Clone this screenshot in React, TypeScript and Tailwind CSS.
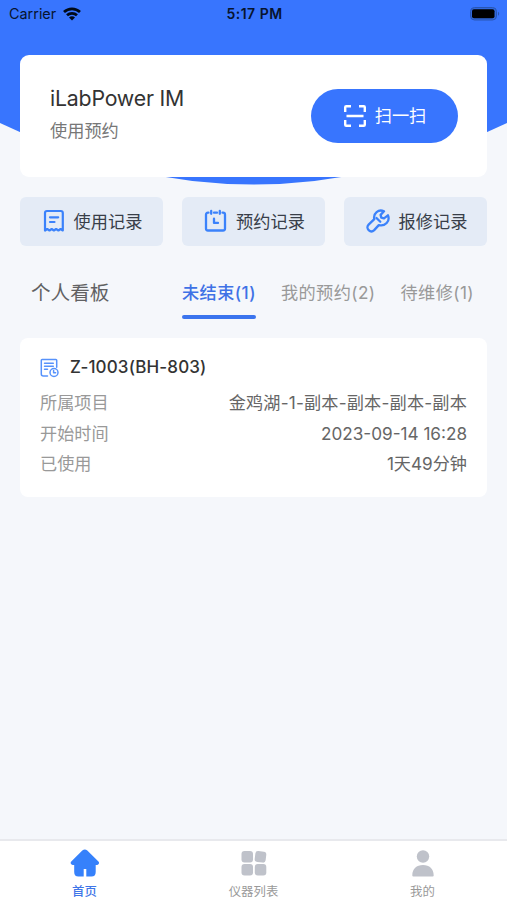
import React, { useState } from 'react';

const tabs = [
  { id: 'open', label: '未结束', count: 1 },
  { id: 'booked', label: '我的预约', count: 2 },
  { id: 'repair', label: '待维修', count: 1 },
];

const details = [
  { label: '所属项目', value: '金鸡湖-1-副本-副本-副本-副本', spacing: 'tracking-[0.2px]' },
  { label: '开始时间', value: '2023-09-14 16:28', spacing: '' },
  { label: '已使用', value: '1天49分钟', spacing: '' },
];

function WifiIcon() {
  return (
    <svg width="18" height="14" viewBox="0 0 18 14" fill="none" stroke="#000a18" strokeWidth="2.7">
      <path d="M1 5.1C5.5.8 12.5.8 17 5.1" />
      <path d="M4 8.3c2.8-2.7 7.2-2.7 10 0" />
      <path d="M9 13.4 6 10.4c1.6-1.5 4.4-1.5 6 0z" fill="#000a18" stroke="none" />
    </svg>
  );
}

function BatteryIcon() {
  return (
    <svg width="30" height="14" viewBox="0 0 30 14">
      <rect x="0.5" y="0.5" width="26" height="12.5" rx="4" fill="#3168dc" stroke="#2856b3" />
      <rect x="2" y="2.2" width="22.5" height="9" rx="2" fill="#000" />
      <path d="M28 4.8v4c1.6-.6 1.6-3.4 0-4z" fill="#2856b3" />
    </svg>
  );
}

function ScanIcon() {
  return (
    <svg width="24" height="24" viewBox="0 0 24 24" fill="none" stroke="white" strokeWidth="2.4">
      <path d="M2.2 8V3.2q0-1 1-1H8M16 2.2h4.8q1 0 1 1V8M21.8 16v4.8q0 1-1 1H16M8 21.8H3.2q-1 0-1-1V16M3.5 12h17" />
    </svg>
  );
}

function ReceiptIcon() {
  return (
    <svg width="22" height="24" viewBox="0 0 22 24" fill="none" stroke="#3b82fb" strokeWidth="2.2" strokeLinejoin="round" strokeLinecap="round">
      <path d="M2 21.5V4q0-2 2-2h13.8q2 0 2 2v17.5L17.6 20l-2.2 1.5-2.3-1.5-2.2 1.5L8.700 20l-2.200 1.500L4.200 20z" />
      <path d="M7 8.300h8.200M7 13h4.500" />
    </svg>
  );
}

function ScheduleIcon() {
  return (
    <svg width="23" height="24" viewBox="0 0 23 24" fill="none" stroke="#3b82fb" strokeWidth="2.3" strokeLinecap="round" strokeLinejoin="round">
      <path d="M4.500 3.700H4Q2 3.700 2 5.700v13.800q0 2 2 2h15q2 0 2-2V5.700q0-2-2-2h-.5M10 3.700h3" />
      <path d="M7.200 2v2.800M15.800 2v2.800" />
      <path d="M10 9.700v4.200h4" />
    </svg>
  );
}

function WrenchIcon() {
  return (
    <svg width="24" height="24" viewBox="0 0 24 24" fill="none" stroke="#3b82fb" strokeWidth="2.300" strokeLinecap="round" strokeLinejoin="round">
      <path d="M18 2.300C12.500-.2 7 4.200 8.300 10.200L2.600 15.600c-3.600 3.700 1.900 9.200 5.600 5.500l4.600-5c6.200 1.700 11.700-4 9.100-9.800l-3.900 3-2.700-.7-.7-2.700z" />
      <path d="m10.500 9 3.800 3.800" />
    </svg>
  );
}

function RecordIcon() {
  return (
    <svg width="20" height="20" viewBox="0 0 20 20" fill="none" stroke="#5792fb" strokeWidth="1.5" strokeLinecap="round" strokeLinejoin="round">
      <path d="M7.500 18H3.300Q1.300 18 1.300 16V2.300q0-.8.8-.8h13.800q.8 0 .8.800v7" />
      <path d="M4.500 5.200h8.800M4.500 8.200h8.800M4.500 11.200h3" />
      <circle cx="14" cy="14.500" r="4" />
      <path d="M13.600 12.600v2.200h2" />
    </svg>
  );
}

function HomeIcon() {
  return (
    <svg width="30" height="28" viewBox="0 0 30 28" fill="#3681fb">
      <path d="M12.300 1.600q2.500-2.100 5 0L28.200 12.200c1.900 1.900.4 3.900-2.500 3.800V23q0 4.500-4.200 4.500h-5.200V20h-2.600v7.500H8.400q-4.200 0-4.200-4.500v-7C1 16-.4 14.100 1.500 12.200z" />
    </svg>
  );
}

function GridIcon() {
  return (
    <svg width="26" height="26" viewBox="0 0 26 26" fill="#bfc2ca">
      <rect x="0.500" y="1" width="11.500" height="11.500" rx="3" />
      <rect x="14" y="1.300" width="11" height="11" rx="2.800" transform="rotate(7 19.500 6.800)" />
      <rect x="0.500" y="14" width="11.500" height="11.500" rx="3" />
      <rect x="13.800" y="14" width="11.500" height="11.500" rx="3" />
    </svg>
  );
}

function UserIcon() {
  return (
    <svg width="22" height="27" viewBox="0 0 22 27" fill="#bfc2ca">
      <circle cx="11" cy="6.500" r="6.200" />
      <path d="M.3 25.500C.3 18.800 4.500 15 11 15s10.700 3.800 10.700 10.500q0 1-1 1H1.300q-1 0-1-1z" />
    </svg>
  );
}

const shortcuts = [
  { label: '使用记录', icon: <ReceiptIcon /> },
  { label: '预约记录', icon: <ScheduleIcon /> },
  { label: '报修记录', icon: <WrenchIcon /> },
];

const navItems = [
  { id: 'home', label: '首页', icon: <HomeIcon /> },
  { id: 'devices', label: '仪器列表', icon: <GridIcon /> },
  { id: 'me', label: '我的', icon: <UserIcon /> },
];

function App() {
  const [activeTab, setActiveTab] = useState('open');
  const [activeNav, setActiveNav] = useState('home');

  return (
    <div className="relative isolate flex h-screen w-full flex-col overflow-hidden bg-[#f5f7fb] font-['Inter','Noto_Sans_CJK_SC',sans-serif]">
      {/* Curved header background */}
      <svg className="absolute inset-x-0 top-0 -z-10 w-full" height="190" viewBox="0 0 507 190" preserveAspectRatio="none">
        <path d="M0 0h507v123Q253.500 246 0 123z" fill="#3875fe" />
      </svg>

      <header className="grid h-[27px] grid-cols-3 items-center pl-[9px] pr-[7px] text-[#07142f]">
        <div className="flex items-center gap-[7px]">
          <span className="pt-0.5 text-[14.400px] leading-none">Carrier</span>
          <WifiIcon />
        </div>
        <span className="text-center text-[14px] leading-none font-semibold tracking-[0.5px]">5:17 PM</span>
        <div className="flex justify-end"><BatteryIcon /></div>
      </header>

      <main className="flex-1 px-5 pt-[27.500px]">
        <section className="flex h-[122.500px] items-center justify-between rounded-[9px] bg-white pl-[30px] pr-[29px]">
          <div className="-mt-1">
            <h1 className="text-[21.300px] leading-[30px] tracking-[-0.2px] text-[#333]">iLabPower IM</h1>
            <p className="mt-1 text-[17.200px] leading-7 text-[#777]">使用预约</p>
          </div>
          <button className="flex h-[54px] w-[147px] items-center justify-center gap-2 rounded-full bg-[#3875fe] text-[17.200px] text-white">
            <ScanIcon />
            扫一扫
          </button>
        </section>

        <div className="mt-[19.500px] grid grid-cols-3 gap-[19px]">
          {shortcuts.map((item) => (
            <button key={item.label} className="flex h-[49px] items-center justify-center gap-[9px] rounded-[6px] bg-[#e4ebf6] pl-0.5 text-[17.200px] text-[#383e49]">
              {item.icon}
              <span className="pt-px">{item.label}</span>
            </button>
          ))}
        </div>

        <div className="mt-[26px] flex h-[47.500px] items-start pl-[11px] pr-[13px]">
          <h2 className="mr-auto text-[19.600px] leading-[42px] text-[#616163]">个人看板</h2>
          <div className="flex gap-[25px]">
            {tabs.map((tab) => (
              <button
                key={tab.id}
                onClick={() => setActiveTab(tab.id)}
                className={`flex h-[47.500px] flex-col justify-between whitespace-nowrap text-[17.200px] leading-[42px] tracking-[0.4px] ${
                  activeTab === tab.id ? 'font-medium text-[#3f72e6]' : 'text-[#999]'
                }`}
              >
                <span>{tab.label}({tab.count})</span>
                {activeTab === tab.id && <span className="h-1 w-full shrink-0 rounded-full bg-[#3b74ee]" />}
              </button>
            ))}
          </div>
        </div>

        <section className="mt-[19px] h-[159px] rounded-lg bg-white px-5 pt-[14px]">
          <div className="mb-1 flex h-[31px] items-center gap-[10px]">
            <RecordIcon />
            <h3 className="pt-px text-[17px] font-medium tracking-[0.15px] text-[#333]">Z-1003(BH-803)</h3>
          </div>
          {details.map((item) => (
            <div key={item.label} className="flex h-[30.500px] items-center justify-between pt-0.5 text-[17.150px]">
              <span className="text-[#999]">{item.label}</span>
              <span className={`text-[#666] ${item.spacing}`}>{item.value}</span>
            </div>
          ))}
        </section>
      </main>

      <nav className="grid h-[61px] grid-cols-3 border-t-2 border-[#e8e9ed] bg-white">
        {navItems.map((item) => (
          <button
            key={item.id}
            onClick={() => setActiveNav(item.id)}
            className={`flex flex-col items-center justify-start pt-2 text-[12.400px] leading-[18px] ${
              activeNav === item.id ? 'font-medium text-[#3f76e8]' : 'text-[#999]'
            }`}
          >
            <span className="mb-1.5 flex h-[28px] items-center">{item.icon}</span>
            {item.label}
          </button>
        ))}
      </nav>
    </div>
  );
}

export default App;
